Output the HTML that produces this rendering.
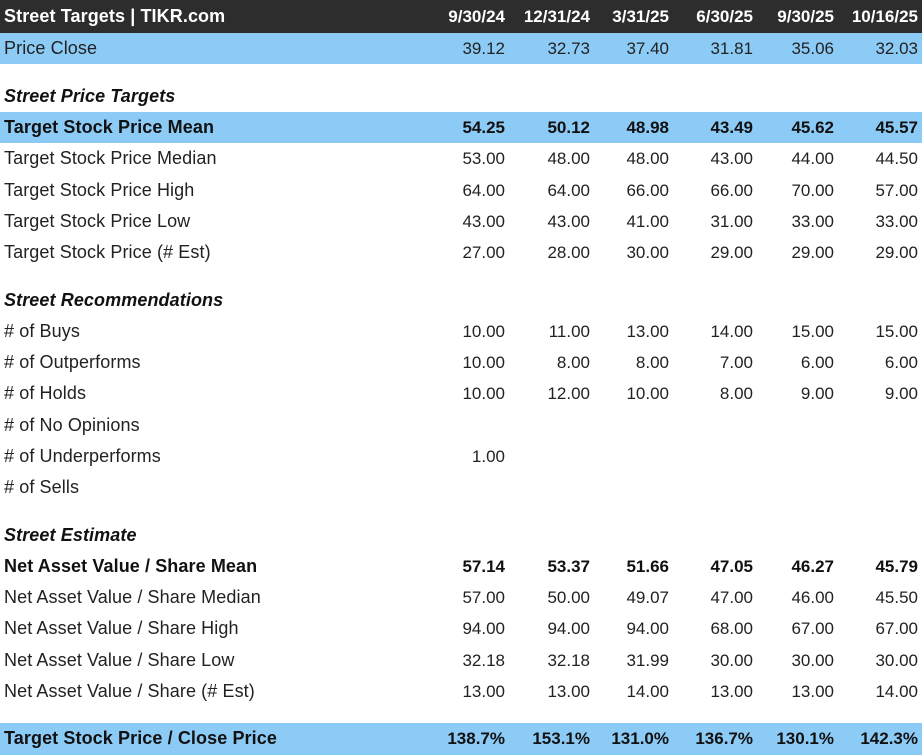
<!DOCTYPE html>
<html><head><meta charset="utf-8"><style>
body{margin:0;width:922px;height:750px;overflow:hidden;background:#fff;font-family:"Liberation Sans",Arial,sans-serif;font-size:17px;color:#222;position:relative}
.r{position:absolute;left:0;width:922px;height:31px;line-height:31px}
.r span{position:absolute;top:0;white-space:nowrap}
.l{left:4px;font-size:18px;letter-spacing:0.1px}
.c1{right:417px}.c2{right:332px}.c3{right:253px}.c4{right:169px}.c5{right:88px}.c6{right:4px}
.h{background:#2d2d2d;color:#fff;font-weight:bold;height:33px;line-height:33px;top:0}
.b{background:#8dcbf7}
.bold{font-weight:bold;color:#111}
.it{font-weight:bold;font-style:italic;color:#111}
</style></head><body>
<div class="r h"><span class="l">Street Targets | TIKR.com</span><span class="c1">9/30/24</span><span class="c2">12/31/24</span><span class="c3">3/31/25</span><span class="c4">6/30/25</span><span class="c5">9/30/25</span><span class="c6">10/16/25</span></div>
<div class="r b" style="top:33px"><span class="l">Price Close</span><span class="c1">39.12</span><span class="c2">32.73</span><span class="c3">37.40</span><span class="c4">31.81</span><span class="c5">35.06</span><span class="c6">32.03</span></div>
<div class="r it" style="top:81px"><span class="l">Street Price Targets</span></div>
<div class="r b bold" style="top:112px"><span class="l">Target Stock Price Mean</span><span class="c1">54.25</span><span class="c2">50.12</span><span class="c3">48.98</span><span class="c4">43.49</span><span class="c5">45.62</span><span class="c6">45.57</span></div>
<div class="r" style="top:143px"><span class="l">Target Stock Price Median</span><span class="c1">53.00</span><span class="c2">48.00</span><span class="c3">48.00</span><span class="c4">43.00</span><span class="c5">44.00</span><span class="c6">44.50</span></div>
<div class="r" style="top:175px"><span class="l">Target Stock Price High</span><span class="c1">64.00</span><span class="c2">64.00</span><span class="c3">66.00</span><span class="c4">66.00</span><span class="c5">70.00</span><span class="c6">57.00</span></div>
<div class="r" style="top:206px"><span class="l">Target Stock Price Low</span><span class="c1">43.00</span><span class="c2">43.00</span><span class="c3">41.00</span><span class="c4">31.00</span><span class="c5">33.00</span><span class="c6">33.00</span></div>
<div class="r" style="top:237px"><span class="l">Target Stock Price (# Est)</span><span class="c1">27.00</span><span class="c2">28.00</span><span class="c3">30.00</span><span class="c4">29.00</span><span class="c5">29.00</span><span class="c6">29.00</span></div>
<div class="r it" style="top:285px"><span class="l">Street Recommendations</span></div>
<div class="r" style="top:316px"><span class="l"># of Buys</span><span class="c1">10.00</span><span class="c2">11.00</span><span class="c3">13.00</span><span class="c4">14.00</span><span class="c5">15.00</span><span class="c6">15.00</span></div>
<div class="r" style="top:347px"><span class="l"># of Outperforms</span><span class="c1">10.00</span><span class="c2">8.00</span><span class="c3">8.00</span><span class="c4">7.00</span><span class="c5">6.00</span><span class="c6">6.00</span></div>
<div class="r" style="top:378px"><span class="l"># of Holds</span><span class="c1">10.00</span><span class="c2">12.00</span><span class="c3">10.00</span><span class="c4">8.00</span><span class="c5">9.00</span><span class="c6">9.00</span></div>
<div class="r" style="top:410px"><span class="l"># of No Opinions</span></div>
<div class="r" style="top:441px"><span class="l"># of Underperforms</span><span class="c1">1.00</span></div>
<div class="r" style="top:472px"><span class="l"># of Sells</span></div>
<div class="r it" style="top:520px"><span class="l">Street Estimate</span></div>
<div class="r bold" style="top:551px"><span class="l">Net Asset Value / Share Mean</span><span class="c1">57.14</span><span class="c2">53.37</span><span class="c3">51.66</span><span class="c4">47.05</span><span class="c5">46.27</span><span class="c6">45.79</span></div>
<div class="r" style="top:582px"><span class="l">Net Asset Value / Share Median</span><span class="c1">57.00</span><span class="c2">50.00</span><span class="c3">49.07</span><span class="c4">47.00</span><span class="c5">46.00</span><span class="c6">45.50</span></div>
<div class="r" style="top:613px"><span class="l">Net Asset Value / Share High</span><span class="c1">94.00</span><span class="c2">94.00</span><span class="c3">94.00</span><span class="c4">68.00</span><span class="c5">67.00</span><span class="c6">67.00</span></div>
<div class="r" style="top:645px"><span class="l">Net Asset Value / Share Low</span><span class="c1">32.18</span><span class="c2">32.18</span><span class="c3">31.99</span><span class="c4">30.00</span><span class="c5">30.00</span><span class="c6">30.00</span></div>
<div class="r" style="top:676px"><span class="l">Net Asset Value / Share (# Est)</span><span class="c1">13.00</span><span class="c2">13.00</span><span class="c3">14.00</span><span class="c4">13.00</span><span class="c5">13.00</span><span class="c6">14.00</span></div>
<div class="r b bold" style="top:723px;height:32px;line-height:31px"><span class="l">Target Stock Price / Close Price</span><span class="c1">138.7%</span><span class="c2">153.1%</span><span class="c3">131.0%</span><span class="c4">136.7%</span><span class="c5">130.1%</span><span class="c6">142.3%</span></div>
</body></html>
